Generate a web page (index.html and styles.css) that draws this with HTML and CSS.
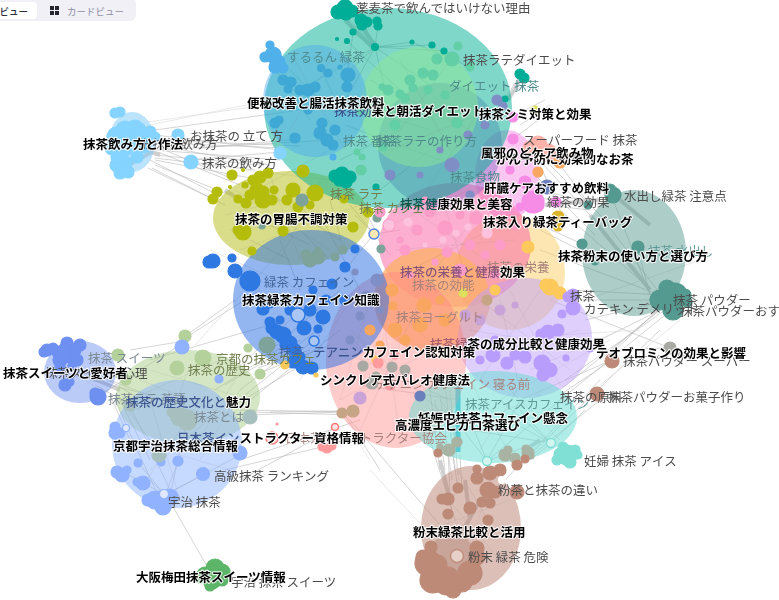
FILE: index.html
```html
<!DOCTYPE html>
<html lang="ja">
<head>
<meta charset="utf-8">
<title>抹茶 トピックマップ</title>
<link rel="stylesheet" href="styles.css">
</head>
<body>
<main class="stage">
<svg class="graph" viewBox="0 0 779 600" width="779" height="600" role="img" aria-label="抹茶キーワードのネットワーク図">
  <!-- edges -->
  <path class="edge" d="M155 130L300 110M155 135L280 150M155 140L300 146M158 143L285 148M158 146L270 165M155 150L280 160M155 155L260 165M155 158L255 170M155 160L250 178M155 165L230 195M152 168L215 200M148 168L225 205M190 160L280 152M200 148L290 140M160 150L330 140M158 152L240 185M160 148L235 180M150 160L218 195
    M374 234L345 270M374 234L355 215M374 234L400 230M374 234L390 255M374 234L350 205M365 210L380 240M330 200L345 255M300 230L330 260M250 240L290 260M260 220L310 245M300 215L340 240M280 240L300 290M320 215L360 290
    M260 360L340 290M240 390L330 320M250 400L340 330M255 375L330 345M235 370L290 320M200 345L270 325M190 335L260 290M180 340L235 300M130 350L190 340M150 360L200 345M100 395L180 345M225 385L300 340M245 395L320 335M215 390L285 345M235 405L310 360M258 368L310 350M110 380L160 400M100 375L150 405M95 385L140 410M90 380L150 395
    M110 395L130 440M115 400L160 500M120 400L150 460M125 395L170 490M118 395L160 455M170 495L185 430M165 495L140 465M165 495L120 470M165 495L150 480M165 495L178 462M165 495L205 474M165 495L240 455M240 410L360 412M245 415L345 412M250 412L355 415M270 412L340 411M240 480L335 428M225 470L330 445M240 460L360 420M172 505L212 575
    M345 415L380 470M350 420L440 525M360 385L460 400M430 390L440 470M435 400L445 470M440 395L452 480M445 385L455 470M450 390L458 475M430 440L455 520M448 450L450 495M453 455L458 490M460 455L462 490
    M487 461L440 400M487 461L520 400M487 461L470 420M487 461L560 400M487 461L545 440M551 443L500 400M551 443L490 410M551 443L520 410M551 443L530 460M551 443L470 430M551 443L585 410M505 480L600 380M520 465L600 400M530 455L660 330M560 400L665 315
    M612 360L560 395M612 360L520 400M660 310L600 340M660 310L560 390M665 310L565 380M665 305L600 360M668 300L610 355M668 300L585 320M665 300L580 300M665 295L570 290M660 295L540 250M650 295L638 250M650 295L612 197M665 300L600 215M640 280L560 210M600 260L540 230M582 244L530 220M600 350L670 348M550 300L670 348
    M520 75L505 99M505 99L530 80M505 120L545 100M520 125L550 105M513 139L545 115M540 190L600 205M540 198L590 205M545 205L590 210M540 165L560 210M530 150L590 215M545 160L600 215M560 165L590 205M535 175L595 235
    M375 47L345 15M375 47L362 20M375 47L378 25M375 47L353 33M375 47L412 42M375 47L432 45M375 47L444 51M375 47L430 85M375 47L345 75M375 47L385 90M353 33L345 90M347 41L400 90M412 42L470 67M300 90L375 47M321 68L335 100M290 70L330 110M275 68L310 120M340 110L375 47M350 105L430 130M345 125L440 160M340 160L400 130M380 190L430 150"/>
  <path class="edge soft" d="M150 125L270 100M148 122L300 100M245 170L330 180M238 200L330 150M210 250L300 290M500 400L610 340M640 330L560 335M600 385L680 320M585 300L700 260M530 370L620 330M205 430L235 380M240 390L200 460M500 540L440 440M370 470L440 545M350 430L370 460M195 345L300 230M300 380L350 300"/>
  <path class="edge heavy" d="M140 148L160 155M225 190L240 200M120 170L155 150M360 25L375 45M345 20L372 47M520 80L508 100M590 215L650 290M620 200L650 225M545 205L600 200M440 460L450 500M465 480L470 520M480 500L455 545M540 440L525 450M92 378L120 390"/>
  <path class="edge bar" d="M458 385L458 452"/>

  <!-- hulls -->
  <ellipse class="h h-sky" cx="132" cy="142" rx="23" ry="30"/>
  <ellipse class="h h-lblue" cx="80" cy="372" rx="36" ry="31"/>
  <ellipse class="h h-sage" cx="188" cy="397" rx="72" ry="47"/>
  <ellipse class="h h-peri" cx="177" cy="444" rx="65" ry="64"/>
  <ellipse class="h h-olive" cx="291" cy="218" rx="78" ry="47"/>
  <ellipse class="h h-yellow" cx="510" cy="272" rx="55" ry="58"/>
  <ellipse class="h h-magenta" cx="507" cy="175" rx="32" ry="45"/>
  <ellipse class="h h-pink" cx="455" cy="245" rx="76" ry="62"/>
  <ellipse class="h h-salmon" cx="432" cy="300" rx="58" ry="52"/>
  <ellipse class="h h-purple" cx="525" cy="338" rx="67" ry="60"/>
  <ellipse class="h h-red" cx="396" cy="360" rx="70" ry="88"/>
  <ellipse class="h h-blue" cx="311" cy="300" rx="78" ry="70"/>
  <ellipse class="h h-slate" cx="440" cy="145" rx="62" ry="62"/>
  <ellipse class="h h-teal" cx="388" cy="108" rx="124" ry="100"/>
  <ellipse class="h h-green" cx="419" cy="107" rx="59" ry="60"/>
  <ellipse class="h h-cyan" cx="315" cy="101" rx="52" ry="56"/>
  <ellipse class="h h-aqua" cx="493" cy="417" rx="84" ry="46"/>
  <ellipse class="h h-brown" cx="471" cy="528" rx="50" ry="62"/>
  <ellipse class="h h-sea" cx="634" cy="253" rx="52" ry="63"/>

  <!-- fine web inside the hulls -->
  <path class="web" d="M235 190L330 250M250 180L340 240M225 215L320 190M240 250L360 205M270 175L300 260M320 180L280 260M345 220L230 230M420 215L500 270M390 225L470 190M400 275L510 220M440 190L470 290M480 210L420 290M515 240L395 250M480 300L570 370M470 360L580 330M500 300L520 390M540 290L480 380M470 330L590 350M510 290L560 385M350 330L450 420M340 400L450 340M380 290L400 440M420 300L360 430M340 350L450 400M385 300L450 360M370 300L340 400M430 410L560 420M440 440L540 395M470 380L510 455M520 385L480 450M500 380L560 440M295 60L345 150M285 100L355 115M330 60L290 130M450 60L400 130M370 80L470 130M400 60L450 150M390 150L490 110M420 200L480 110M140 380L240 420M150 370L250 400M130 400L220 360M190 365L170 420M130 440L230 470M150 400L180 500M200 400L140 490M220 410L150 470M440 490L500 560M460 470L440 560M490 480L470 550M430 530L510 500M60 360L105 395M70 380L110 360"/>

  <!-- nodes -->
  <g class="n n-teal">
    <circle cx="338" cy="12" r="7"/><circle cx="345" cy="8" r="8"/><circle cx="352" cy="11" r="6"/><circle cx="346" cy="14" r="6"/>
    <circle cx="361" cy="20" r="6"/><circle cx="367" cy="22" r="5"/><circle cx="362" cy="25" r="5"/><circle cx="377" cy="21" r="4"/><circle cx="378" cy="26" r="4"/>
    <circle cx="375" cy="47" r="3.5"/><circle cx="353" cy="32" r="3"/><circle cx="347" cy="41" r="2.5"/><circle cx="337" cy="39" r="1.5"/><circle cx="412" cy="42" r="2"/><circle cx="432" cy="45" r="3"/><circle cx="444" cy="51" r="3"/>
    <circle cx="335" cy="176" r="6"/><circle cx="342" cy="174" r="7"/><circle cx="350" cy="177" r="6"/><circle cx="339" cy="181" r="5"/><circle cx="346" cy="182" r="6"/><circle cx="376" cy="187" r="3"/>
    <circle cx="520" cy="74" r="5"/><circle cx="524" cy="78" r="5"/><circle cx="505" cy="99" r="3"/>
  </g>
  <g class="n n-mint">
    <circle cx="458" cy="46" r="4"/><circle cx="452" cy="59" r="7"/><circle cx="437" cy="59" r="5"/><circle cx="470" cy="67" r="4"/><circle cx="423" cy="73" r="5"/><circle cx="410" cy="80" r="5"/><circle cx="433" cy="75" r="5"/><circle cx="413" cy="88" r="4"/><circle cx="400" cy="94" r="4"/><circle cx="388" cy="90" r="5"/><circle cx="382" cy="87" r="3"/><circle cx="395" cy="125" r="5"/><circle cx="457" cy="123" r="5"/><circle cx="383" cy="147" r="4"/><circle cx="357" cy="152" r="3"/><circle cx="362" cy="157" r="3"/><circle cx="361" cy="170" r="5"/><circle cx="445" cy="95" r="4"/><circle cx="420" cy="112" r="6"/><circle cx="360" cy="110" r="4"/><circle cx="405" cy="98" r="4"/><circle cx="428" cy="90" r="4"/><circle cx="375" cy="100" r="4"/>
  </g>
  <g class="n n-cyan">
    <circle cx="321" cy="68" r="3.5"/><circle cx="328" cy="73" r="4"/><circle cx="288" cy="89" r="4"/><circle cx="283" cy="80" r="5"/><circle cx="291" cy="82" r="5"/><circle cx="300" cy="90" r="5"/><circle cx="308" cy="90" r="6"/><circle cx="315" cy="87" r="5"/><circle cx="347" cy="87" r="5"/><circle cx="348" cy="75" r="7"/><circle cx="275" cy="123" r="5"/><circle cx="295" cy="138" r="5"/><circle cx="322" cy="123" r="5"/><circle cx="320" cy="133" r="6"/><circle cx="335" cy="130" r="5"/><circle cx="327" cy="140" r="6"/><circle cx="333" cy="145" r="5"/><circle cx="308" cy="110" r="4"/><circle cx="279" cy="120" r="4"/><circle cx="340" cy="67" r="2"/>
  </g>
  <g class="n n-sky2">
    <circle cx="270" cy="45" r="4"/><circle cx="273" cy="55" r="8"/><circle cx="265" cy="57" r="5"/><circle cx="275" cy="67" r="6"/><circle cx="283" cy="68" r="5"/><circle cx="278" cy="62" r="7"/><circle cx="333" cy="157" r="3"/>
  </g>
  <g class="n n-sky">
    <circle cx="178" cy="135" r="6"/><circle cx="191" cy="162" r="7"/><circle cx="280" cy="153" r="6"/>
    <circle cx="120" cy="112" r="5"/><circle cx="115" cy="113" r="5"/><circle cx="125" cy="130" r="9"/><circle cx="135" cy="128" r="8"/><circle cx="117" cy="137" r="10"/><circle cx="140" cy="128" r="5"/><circle cx="155" cy="137" r="5"/><circle cx="137" cy="157" r="6"/><circle cx="125" cy="163" r="7"/><circle cx="117" cy="165" r="7"/><circle cx="128" cy="172" r="6"/><circle cx="120" cy="173" r="6"/><circle cx="117" cy="157" r="6"/><circle cx="123" cy="147" r="10"/><circle cx="133" cy="143" r="8"/><circle cx="143" cy="147" r="6"/><circle cx="150" cy="132" r="6"/><circle cx="143" cy="135" r="8"/><circle cx="112" cy="148" r="7"/>
  </g>
  <g class="n n-olive">
    <circle cx="232" cy="175" r="5"/><circle cx="253" cy="180" r="5"/><circle cx="260" cy="177" r="6"/><circle cx="268" cy="173" r="5"/><circle cx="257" cy="190" r="7"/><circle cx="263" cy="192" r="6"/><circle cx="245" cy="185" r="3"/><circle cx="293" cy="190" r="7"/><circle cx="287" cy="200" r="5"/><circle cx="315" cy="193" r="8"/><circle cx="274" cy="190" r="4"/><circle cx="303" cy="171" r="6"/><circle cx="217" cy="192" r="5"/><circle cx="213" cy="199" r="5"/><circle cx="238" cy="199" r="4"/><circle cx="246" cy="203" r="5"/><circle cx="298" cy="207" r="5"/><circle cx="243" cy="232" r="8"/><circle cx="238" cy="230" r="5"/><circle cx="283" cy="231" r="5"/><circle cx="353" cy="227" r="5"/><circle cx="368" cy="212" r="5"/><circle cx="252" cy="251" r="4"/><circle cx="344" cy="199" r="4"/><circle cx="263" cy="200" r="8"/><circle cx="230" cy="187" r="1.5"/><circle cx="243" cy="170" r="1.5"/><circle cx="272" cy="200" r="5"/><circle cx="310" cy="205" r="4"/><circle cx="250" cy="195" r="5"/>
  </g>
  <g class="n n-grayteal">
    <circle cx="302" cy="200" r="6"/><circle cx="377" cy="218" r="4"/><circle cx="262" cy="226" r="3"/><circle cx="310" cy="260" r="7"/><circle cx="318" cy="257" r="7"/><circle cx="306" cy="255" r="5"/><circle cx="318" cy="250" r="3"/><circle cx="335" cy="257" r="4"/><circle cx="343" cy="250" r="4"/><circle cx="381" cy="249" r="4"/><circle cx="267" cy="345" r="8"/>
  </g>
  <g class="n n-blue">
    <circle cx="209" cy="262" r="6"/><circle cx="213" cy="261" r="7"/><circle cx="232" cy="258" r="4"/><circle cx="235" cy="271" r="7"/><circle cx="250" cy="281" r="10"/><circle cx="345" cy="267" r="5"/><circle cx="355" cy="249" r="4"/><circle cx="272" cy="328" r="6"/><circle cx="277" cy="332" r="7"/><circle cx="283" cy="335" r="8"/><circle cx="290" cy="343" r="7"/><circle cx="304" cy="328" r="7"/><circle cx="293" cy="362" r="6"/><circle cx="303" cy="367" r="7"/><circle cx="312" cy="368" r="6"/><circle cx="263" cy="309" r="6"/><circle cx="270" cy="304" r="4"/><circle cx="310" cy="310" r="6"/><circle cx="323" cy="317" r="7"/><circle cx="318" cy="329" r="4"/><circle cx="290" cy="310" r="5"/><circle cx="345" cy="300" r="5"/><circle cx="332" cy="284" r="5"/><circle cx="313" cy="290" r="4"/><circle cx="270" cy="322" r="5"/><circle cx="295" cy="350" r="6"/><circle cx="285" cy="345" r="5"/><circle cx="300" cy="357" r="5"/><circle cx="326" cy="300" r="5"/><circle cx="280" cy="320" r="4"/>
  </g>
  <g class="n n-ring-blue"><circle cx="298" cy="315" r="7"/><circle cx="314" cy="341" r="5"/></g>
  <g class="n n-slate">
    <circle cx="497" cy="100" r="5"/><circle cx="503" cy="106" r="4"/><circle cx="452" cy="165" r="7"/><circle cx="420" cy="175" r="3"/><circle cx="468" cy="135" r="4"/><circle cx="485" cy="125" r="4"/><circle cx="390" cy="175" r="5"/><circle cx="440" cy="150" r="3"/><circle cx="470" cy="195" r="4"/><circle cx="366" cy="295" r="4"/><circle cx="377" cy="280" r="6"/><circle cx="360" cy="316" r="4"/><circle cx="380" cy="310" r="3"/><circle cx="355" cy="272" r="3"/><circle cx="350" cy="340" r="4"/>
  </g>
  <g class="n n-pink">
    <circle cx="389" cy="225" r="6"/><circle cx="400" cy="240" r="3"/><circle cx="417" cy="230" r="5"/><circle cx="445" cy="228" r="7"/><circle cx="476" cy="218" r="6"/><circle cx="447" cy="252" r="5"/><circle cx="405" cy="250" r="5"/><circle cx="500" cy="245" r="5"/><circle cx="470" cy="245" r="5"/><circle cx="380" cy="212" r="5"/><circle cx="430" cy="212" r="5"/><circle cx="515" cy="225" r="4"/><circle cx="410" cy="275" r="3"/><circle cx="460" cy="270" r="6"/><circle cx="495" cy="275" r="4"/><circle cx="435" cy="262" r="3"/><circle cx="460" cy="215" r="4"/><circle cx="485" cy="255" r="4"/><circle cx="425" cy="200" r="3"/>
  </g>
  <g class="n n-pale">
    <circle cx="389" cy="225" r="5"/><circle cx="408" cy="222" r="4"/><circle cx="487" cy="233" r="5"/><circle cx="456" cy="233" r="3"/><circle cx="425" cy="245" r="2"/><circle cx="443" cy="240" r="3"/><circle cx="468" cy="227" r="3"/>
  </g>
  <g class="n n-magenta">
    <circle cx="513" cy="139" r="5"/><circle cx="513" cy="117" r="5"/><circle cx="525" cy="182" r="6"/><circle cx="533" cy="202" r="11"/><circle cx="537" cy="205" r="7"/><circle cx="510" cy="170" r="4"/><circle cx="556" cy="202" r="5"/><circle cx="507" cy="188" r="3"/><circle cx="520" cy="207" r="4"/>
  </g>
  <g class="n n-peach"><circle cx="530" cy="148" r="7"/><circle cx="538" cy="145" r="9"/><circle cx="548" cy="153" r="9"/></g>
  <g class="n n-orange">
    <circle cx="538" cy="172" r="5"/><circle cx="560" cy="162" r="6"/><circle cx="545" cy="158" r="1.5"/><circle cx="570" cy="155" r="2"/>
    <circle cx="392" cy="290" r="6"/><circle cx="424" cy="305" r="7"/><circle cx="445" cy="320" r="6"/><circle cx="395" cy="330" r="7"/><circle cx="370" cy="330" r="5"/><circle cx="420" cy="325" r="7"/><circle cx="405" cy="340" r="5"/><circle cx="393" cy="306" r="4"/><circle cx="440" cy="300" r="4"/><circle cx="380" cy="345" r="4"/>
  </g>
  <g class="n n-yellow">
    <circle cx="528" cy="247" r="6"/><circle cx="550" cy="287" r="8"/><circle cx="560" cy="293" r="6"/><circle cx="546" cy="285" r="6"/><circle cx="495" cy="290" r="5"/><circle cx="376" cy="360" r="4"/><circle cx="285" cy="365" r="4"/><circle cx="316" cy="375" r="2"/>
  </g>
  <g class="n n-gold"><circle cx="558" cy="217" r="6"/><circle cx="558" cy="226" r="5"/></g>
  <g class="n n-indigo"><circle cx="547" cy="187" r="7"/><circle cx="420" cy="396" r="5"/></g>
  <g class="n n-lime"><circle cx="535" cy="110" r="4"/><circle cx="463" cy="293" r="4"/></g>
  <g class="n n-purple">
    <circle cx="573" cy="295" r="6"/><circle cx="568" cy="297" r="5"/><circle cx="573" cy="308" r="7"/><circle cx="562" cy="314" r="4"/><circle cx="548" cy="332" r="7"/><circle cx="558" cy="330" r="6"/><circle cx="541" cy="334" r="5"/><circle cx="493" cy="355" r="7"/><circle cx="507" cy="363" r="6"/><circle cx="515" cy="355" r="5"/><circle cx="525" cy="357" r="6"/><circle cx="542" cy="363" r="8"/><circle cx="550" cy="370" r="7"/><circle cx="543" cy="375" r="6"/><circle cx="566" cy="358" r="3"/><circle cx="590" cy="348" r="4"/><circle cx="495" cy="340" r="4"/><circle cx="480" cy="360" r="4"/>
  </g>
  <g class="n n-mauve"><circle cx="360" cy="398" r="6"/><circle cx="480" cy="320" r="5"/><circle cx="500" cy="310" r="5"/><circle cx="465" cy="315" r="5"/><circle cx="515" cy="305" r="3"/></g>
  <g class="n n-tan"><circle cx="353" cy="411" r="6"/><circle cx="342" cy="413" r="5"/><circle cx="487" cy="300" r="5"/></g>
  <g class="n n-gray"><circle cx="372" cy="383" r="6"/><circle cx="376" cy="376" r="4"/><circle cx="392" cy="367" r="5"/><circle cx="405" cy="370" r="5"/><circle cx="363" cy="366" r="5"/><circle cx="670" cy="348" r="6"/><circle cx="677" cy="352" r="3"/></g>
  <g class="n n-red">
    <circle cx="327" cy="448" r="5"/><circle cx="322" cy="447" r="4"/><circle cx="332" cy="446" r="4"/><circle cx="277" cy="424" r="1"/><circle cx="395" cy="355" r="4"/><circle cx="390" cy="385" r="5"/><circle cx="378" cy="363" r="5"/>
  </g>
  <g class="n n-ring-red"><circle cx="272" cy="438" r="6"/><circle cx="335" cy="427" r="3.5"/></g>
  <g class="n n-lblue">
    <circle cx="47" cy="350" r="6"/><circle cx="44" cy="352" r="5"/><circle cx="58" cy="352" r="6"/><circle cx="67" cy="343" r="6"/><circle cx="80" cy="345" r="6"/><circle cx="70" cy="355" r="8"/><circle cx="60" cy="360" r="7"/><circle cx="77" cy="360" r="6"/><circle cx="65" cy="385" r="6"/><circle cx="70" cy="382" r="4"/><circle cx="98" cy="397" r="8"/><circle cx="95" cy="393" r="5"/><circle cx="53" cy="348" r="5"/><circle cx="65" cy="350" r="7"/><circle cx="75" cy="350" r="6"/><circle cx="60" cy="366" r="5"/><circle cx="72" cy="366" r="4"/>
  </g>
  <g class="n n-sage">
    <circle cx="185" cy="336" r="6"/><circle cx="118" cy="355" r="6"/><circle cx="126" cy="380" r="5"/><circle cx="177" cy="368" r="7"/><circle cx="203" cy="358" r="8"/><circle cx="260" cy="374" r="5"/><circle cx="248" cy="348" r="4"/><circle cx="120" cy="375" r="4"/>
  </g>
  <g class="n n-peri">
    <circle cx="115" cy="427" r="5"/><circle cx="115" cy="433" r="6"/><circle cx="120" cy="433" r="5"/><circle cx="117" cy="472" r="6"/><circle cx="122" cy="475" r="7"/><circle cx="127" cy="470" r="4"/><circle cx="138" cy="463" r="4"/><circle cx="143" cy="483" r="7"/><circle cx="137" cy="482" r="4"/><circle cx="155" cy="500" r="9"/><circle cx="163" cy="507" r="8"/><circle cx="170" cy="497" r="8"/><circle cx="148" cy="500" r="6"/><circle cx="160" cy="500" r="9"/><circle cx="161" cy="462" r="4"/><circle cx="178" cy="461" r="5"/><circle cx="203" cy="474" r="6.5"/><circle cx="240" cy="453" r="7"/><circle cx="182" cy="347" r="7"/><circle cx="219" cy="379" r="4"/>
  </g>
  <g class="n n-fog"><circle cx="187" cy="420" r="10"/><circle cx="180" cy="417" r="9"/><circle cx="159" cy="455" r="7"/><circle cx="250" cy="417" r="7"/><circle cx="130" cy="405" r="6"/><circle cx="172" cy="412" r="5"/></g>
  <g class="n n-ring-peri"><circle cx="164" cy="494" r="4.5"/><circle cx="126" cy="428" r="3.5"/></g>
  <g class="n n-grass">
    <circle cx="205" cy="575" r="8"/><circle cx="215" cy="568" r="9"/><circle cx="222" cy="572" r="8"/><circle cx="212" cy="580" r="9"/><circle cx="222" cy="580" r="6"/><circle cx="200" cy="578" r="5"/><circle cx="210" cy="586" r="5"/><circle cx="213" cy="575" r="10"/>
  </g>
  <g class="n n-sea">
    <circle cx="675" cy="295" r="12"/><circle cx="660" cy="300" r="10"/><circle cx="673" cy="310" r="10"/><circle cx="685" cy="295" r="6"/><circle cx="667" cy="288" r="8"/><circle cx="687" cy="302" r="5"/><circle cx="613" cy="195" r="8"/><circle cx="610" cy="190" r="6"/><circle cx="588" cy="205" r="4"/><circle cx="582" cy="244" r="5"/><circle cx="638" cy="247" r="6"/><circle cx="595" cy="262" r="3"/>
  </g>
  <g class="n n-aquan"><circle cx="567" cy="455" r="10"/><circle cx="563" cy="447" r="5"/><circle cx="575" cy="450" r="5"/><circle cx="557" cy="460" r="5"/><circle cx="570" cy="462" r="6"/><circle cx="578" cy="455" r="4"/><circle cx="560" cy="454" r="6"/></g>
  <g class="n n-khaki">
    <circle cx="449" cy="450" r="6"/><circle cx="457" cy="442" r="5"/><circle cx="440" cy="447" r="3"/><circle cx="505" cy="455" r="6"/><circle cx="515" cy="458" r="5"/><circle cx="528" cy="453" r="6"/><circle cx="526" cy="449" r="4"/><circle cx="531" cy="456" r="3"/><circle cx="508" cy="450" r="4"/>
  </g>
  <circle class="plate" cx="452" cy="555" r="22"/>
  <g class="n n-brown">
    <circle cx="438" cy="453" r="4"/><circle cx="525" cy="459" r="4"/><circle cx="490" cy="473" r="7"/><circle cx="500" cy="470" r="6"/><circle cx="477" cy="478" r="6"/><circle cx="488" cy="490" r="8"/><circle cx="495" cy="492" r="6"/><circle cx="458" cy="488" r="5"/><circle cx="448" cy="499" r="6"/><circle cx="442" cy="499" r="5"/><circle cx="470" cy="508" r="6"/><circle cx="482" cy="502" r="5"/><circle cx="490" cy="503" r="5"/><circle cx="448" cy="514" r="5"/><circle cx="488" cy="520" r="5"/><circle cx="517" cy="492" r="7"/><circle cx="517" cy="465" r="5"/><circle cx="477" cy="469" r="4"/>
    <circle cx="428" cy="563" r="13"/><circle cx="447" cy="581" r="14"/><circle cx="433" cy="580" r="13"/><circle cx="470" cy="573" r="12"/><circle cx="477" cy="557" r="8"/><circle cx="453" cy="590" r="8"/><circle cx="423" cy="557" r="7"/><circle cx="437" cy="565" r="10"/><circle cx="431" cy="547" r="6"/><circle cx="477" cy="548" r="7"/><circle cx="462" cy="582" r="10"/><circle cx="612" cy="361" r="7"/><circle cx="597" cy="394" r="7"/>
  </g>
  <g class="n n-ring-white"><circle cx="502" cy="480" r="3.5"/></g>
  <g class="n n-ring-aqua"><circle cx="487" cy="461" r="4.5"/><circle cx="551" cy="443" r="4.5"/></g>
  <circle class="n-ring-brown" cx="457" cy="556" r="6.5"/>
  <circle class="n-ring-centre" cx="374" cy="234" r="5"/>

  <!-- labels -->
  <g class="label">
    <text x="287" y="56" class="t-teal">するるん 緑茶</text>
    <text x="449" y="85" class="t-teal">ダイエット 抹茶</text>
    <text x="343" y="140" class="t-teal">抹茶 番茶</text>
    <text x="377" y="140" class="t-teal">抹茶ラテの作り方</text>
    <text x="450" y="176" class="t-teal">抹茶食物</text>
    <text x="330" y="193" class="t-olive">抹茶 ラテ</text>
    <text x="359" y="207" class="t-olive">抹茶 カフェ</text>
    <text x="264" y="281" class="t-blue">緑茶 カフェイン</text>
    <text x="487" y="266" class="t-warm">抹茶の栄養</text>
    <text x="412" y="284" class="t-warm">抹茶の効能</text>
    <text x="396" y="316" class="t-warm">抹茶ヨーグルト</text>
    <text x="279" y="351" class="t-blue">抹茶</text>
    <text x="216" y="358" class="t-olive">京都の抹茶カフェ</text>
    <text x="188" y="369" class="t-olive">抹茶の歴史</text>
    <text x="108" y="398" class="t-sage">抹茶ラテ 英語</text>
    <text x="194" y="416" class="t-sage">抹茶とは</text>
    <text x="285" y="437" class="t-warm">日本茶インストラクター協会</text>
    <text x="375" y="383" class="t-warm">テアニン カフェイン 寝る前</text>
    <text x="465" y="403" class="t-sea">抹茶アイスカフェイン</text>
    <text x="648" y="250" class="t-sea">抹茶 水出し</text>
    <text x="356" y="7">薬麦茶で飲んではいけない理由</text>
    <text x="463" y="59">抹茶ラテダイエット</text>
    <text x="190" y="135">お抹茶の 立て 方</text>
    <text x="140" y="143">お抹茶 飲み方</text>
    <text x="202" y="162">抹茶の飲み方</text>
    <text x="523" y="139">スーパーフード 抹茶</text>
    <text x="547" y="201">緑茶の効果</text>
    <text x="624" y="195">水出し緑茶 注意点</text>
    <text x="570" y="295">抹茶</text>
    <text x="584" y="308">カテキン デメリット</text>
    <text x="673" y="299">抹茶 パウダー</text>
    <text x="680" y="310">抹茶パウダーおすすめ</text>
    <text x="623" y="360">抹茶パウダー スーパー</text>
    <text x="88" y="357" class="t-sage">抹茶 スイーツ</text>
    <text x="45" y="372">抹茶スイーツ 心理</text>
    <text x="560" y="396">抹茶の原料</text>
    <text x="608" y="396">抹茶パウダーお菓子作り</text>
    <text x="498" y="489">粉茶と抹茶の違い</text>
    <text x="584" y="460">妊婦 抹茶 アイス</text>
    <text x="214" y="475">高級抹茶 ランキング</text>
    <text x="168" y="501">宇治 抹茶</text>
    <text x="468" y="556">粉末 緑茶 危険</text>
    <text x="231" y="581">宇治 抹茶 スイーツ</text>
  </g>
  <g class="bold">
    <text x="334" y="110"><tspan class="tint tint-blue">抹茶効</tspan>果と朝活ダイエット</text>
    <text x="400" y="203"><tspan class="tint tint-teal">抹茶健</tspan>康効果と美容</text>
    <text x="400" y="271"><tspan class="tint tint-plum">抹茶の栄養と健康</tspan>効果</text>
    <text x="430" y="343"><tspan class="tint tint-rose">抹茶緑</tspan>茶の成分比較と健康効果</text>
    <text x="313" y="351"><tspan class="tint tint-blue">テアニン</tspan>カフェイン認知対策</text>
    <text x="177" y="437"><tspan class="tint tint-blue">日本茶イン</tspan>ストラクター資格情報</text>
    <text x="126" y="401"><tspan class="tint tint-blue">抹茶の歴史文化と</tspan>魅力</text>
    <text x="247" y="102">便秘改善と腸活抹茶飲料</text>
    <text x="479" y="113">抹茶シミ対策と効果</text>
    <text x="83" y="143">抹茶飲み方と作法</text>
    <text x="496" y="158">がん予防に効果的なお茶</text>
    <text x="481" y="152">風邪のどケア飲み物</text>
    <text x="484" y="187">肝臓ケアおすすめ飲料</text>
    <text x="235" y="218">抹茶の胃腸不調対策</text>
    <text x="483" y="221">抹茶入り緑茶ティーバッグ</text>
    <text x="558" y="255">抹茶粉末の使い方と選び方</text>
    <text x="242" y="299">抹茶緑茶カフェイン知識</text>
    <text x="596" y="352">テオブロミンの効果と影響</text>
    <text x="320" y="379">シンクレア式パレオ健康法</text>
    <text x="3" y="372">抹茶スイーツと愛好者</text>
    <text x="418" y="417">妊娠中抹茶カフェイン懸念</text>
    <text x="395" y="424">高濃度エピガロ茶選び</text>
    <text x="113" y="445">京都宇治抹茶総合情報</text>
    <text x="413" y="531">粉末緑茶比較と活用</text>
    <text x="136" y="576">大阪梅田抹茶スイーツ情報</text>
  </g>
</svg>

<nav class="tabs" aria-label="表示切替">
  <button class="tab tab-on" type="button">グラフビュー</button>
  <button class="tab" type="button">
    <svg class="grid-icon" viewBox="0 0 9 9" width="9" height="9" aria-hidden="true"><path d="M0 0h4v4H0zM5 0h4v4H5zM0 5h4v4H0zM5 5h4v4H5z"/></svg>
    カードビュー
  </button>
</nav>
</main>
</body>
</html>
```

FILE: styles.css
```css
html, body { margin: 0; padding: 0; background: #fff; }
body { width: 779px; height: 600px; overflow: hidden; font-family: "Noto Sans CJK JP", "Noto Sans", sans-serif; }

.stage { position: relative; width: 779px; height: 600px; overflow: hidden; }
.graph { display: block; filter: blur(0.4px); }

.edge { fill: none; stroke: #bdbdbd; stroke-width: 0.8; opacity: 0.8; }
.edge.soft { stroke: #dcdcdc; }
.edge.heavy { stroke: #c4c4c4; stroke-width: 4; }
.edge.bar { stroke: #3fb9d6; stroke-width: 5; opacity: 1; }
.web { fill: none; stroke: rgba(120,120,120,.16); stroke-width: 0.7; }

.label text, .bold text { font-size: 12.5px; dominant-baseline: central; }
.label text { fill: #4c4c4c; }
.label .t-teal { fill: #4f8a8c; }
.label .t-olive { fill: #72804f; }
.label .t-blue { fill: #44659a; }
.label .t-warm { fill: #a8827c; }
.label .t-sage { fill: #7c8a94; }
.label .t-sea { fill: #5f9a98; }
.bold text { fill: #000; font-weight: 700; paint-order: stroke; stroke: rgba(255,255,255,.85); stroke-width: 2.2px; stroke-linejoin: round; }
.bold .tint { stroke: none; font-weight: 500; }
.bold .tint-blue { fill: #3d5590; }
.bold .tint-teal { fill: #06564c; }
.bold .tint-plum { fill: #8a5578; }
.bold .tint-rose { fill: #a8606e; }

.h-sky { fill: rgba(120,200,250,.5); }
.h-lblue { fill: rgba(90,130,235,.42); }
.h-sage { fill: rgba(160,200,125,.45); }
.h-peri { fill: rgba(135,175,255,.48); }
.h-olive { fill: rgba(180,188,20,.5); }
.h-yellow { fill: rgba(252,205,100,.5); }
.h-magenta { fill: rgba(245,140,225,.5); }
.h-pink { fill: rgba(250,110,170,.55); }
.h-salmon { fill: rgba(253,175,105,.78); }
.h-purple { fill: rgba(190,160,250,.5); }
.h-red { fill: rgba(255,130,130,.42); }
.h-blue { fill: rgba(40,110,225,.5); }
.h-slate { fill: rgba(120,90,190,.38); }
.h-teal { fill: rgba(0,175,150,.5); }
.h-green { fill: rgba(140,232,150,.5); }
.h-cyan { fill: rgba(70,165,240,.42); }
.h-aqua { fill: rgba(105,220,210,.52); }
.h-brown { fill: rgba(185,130,112,.5); }
.h-sea { fill: rgba(90,155,145,.5); }

.n circle { fill: currentColor; stroke: currentColor; stroke-width: 1.2; }
.n-teal { color: #00ad96; }
.n-mint { color: #63cfa6; }
.n-cyan { color: #3fa8d4; }
.n-sky2 { color: #50b0ea; }
.n-sky { color: #85d3ff; }
.n-olive { color: #b5bd0c; }
.n-grayteal { color: #7ea39b; }
.n-blue { color: #2e78e2; }
.n-slate { color: #7f8fc6; }
.n-pink { color: #fc9cc8; }
.n-pale { color: #fdc3de; }
.n-magenta { color: #f68ce6; }
.n-peach { color: #ffb2aa; }
.n-orange { color: #f9a760; }
.n-yellow { color: #fcc95a; }
.n-gold { color: #dcb42a; }
.n-indigo { color: #6a7fbc; }
.n-lime { color: #dde05c; }
.n-purple { color: #b89dfd; }
.n-mauve { color: #c9a3d8; }
.n-tan { color: #c6a586; }
.n-gray { color: #a9a9a4; }
.n-red { color: #ff9a9d; }
.n-lblue { color: #6e90f0; }
.n-sage { color: #b4d19c; }
.n-peri { color: #90b2ff; }
.n-fog { color: #a7c0bf; }
.n-grass { color: #5cb568; }
.n-sea { color: #549a90; }
.n-aquan { color: #80e0d6; }
.n-khaki { color: #a8b3a3; }
.n-brown { color: #bd8a78; }
.plate { fill: #c9a599; }

.n-ring-blue circle { fill: #a9c6f5; stroke: #2e78e2; stroke-width: 1.5; }
.n-ring-red circle { fill: #ffe4e4; stroke: #f77; stroke-width: 1.5; }
.n-ring-peri circle { fill: #dfe8ff; stroke: #90b2ff; stroke-width: 1.2; }
.n-ring-white circle { fill: #fff; stroke: #fff; }
.n-ring-aqua circle { fill: #d3f5f0; stroke: #7fdfd5; stroke-width: 1.4; }
.n-ring-brown { fill: #e7d0c8; stroke: #c08f7d; stroke-width: 1.5; }
.n-ring-centre { fill: #fde7b4; stroke: #4f83dc; stroke-width: 1.4; }

.tabs { position: absolute; top: -2px; left: -41px; display: flex; align-items: center; gap: 3px; height: 23px; padding: 0 3px 0 2px; background: #f0f0f6; border-radius: 6px; }
.tab { display: flex; align-items: center; gap: 8px; height: 17px; margin-top: 2px; padding: 0 9px 0 10px; border: 0; border-radius: 4px; background: transparent; font: 400 9.5px "Noto Sans CJK JP", sans-serif; color: #8f8fa3; white-space: nowrap; }
.tab-on { background: #fff; color: #2b2b3a; font-weight: 500; }
.grid-icon { fill: #26262e; flex: none; }
```
